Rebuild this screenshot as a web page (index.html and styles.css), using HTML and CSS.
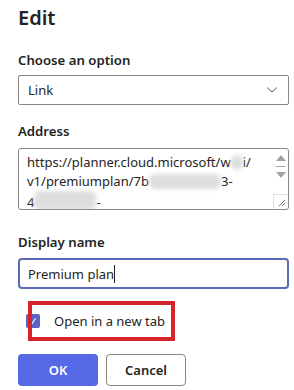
FILE: index.html
```html
<!DOCTYPE html>
<html>

<head>
  <title>Edit</title>
  <link rel="stylesheet" href="styles.css">
</head>

<body>
  <main class="dialog">
    <h1 class="title">Edit</h1>

    <label class="label">Choose an option</label>
    <div class="select">
      <span>Link</span>
      <svg class="chevron" width="12" height="8" viewBox="0 0 12 8">
        <path d="M1 1.5 L6 6 L11 1.5" fill="none" stroke="#605e5c" stroke-width="1"/>
      </svg>
    </div>

    <label class="label label-gap">Address</label>
    <div class="textarea">
      <div class="textarea-text">
        <div>https://planner.cloud.microsoft/w<span class="redact redact-1"></span>i/</div>
        <div>v1/premiumplan/7b<span class="redact redact-2"></span>3-</div>
        <div>4<span class="redact redact-3"></span>-</div>
      </div>
      <div class="scrollbar">
        <span class="arrow-up"></span>
        <span class="thumb"></span>
        <span class="arrow-down"></span>
        <span class="grip">
          <svg width="9" height="9" viewBox="0 0 9 9">
            <path d="M8 2 L2 8 M8 5 L5 8" stroke="#777" stroke-width="1"/>
          </svg>
        </span>
      </div>
    </div>

    <label class="label label-gap-lg">Display name</label>
    <div class="input">Premium plan<span class="caret"></span></div>

    <div class="check-row">
      <span class="checkbox">
        <svg width="10" height="10" viewBox="0 0 10 10">
          <path d="M2.5 5.5 L4 7.5 L7.5 2.5" fill="none" stroke="#fff" stroke-width="1.2"/>
        </svg>
      </span>
      <span class="check-label">Open in a new tab</span>
      <span class="highlight"></span>
    </div>

    <div class="buttons">
      <button class="btn btn-primary">OK</button>
      <button class="btn btn-default">Cancel</button>
    </div>
  </main>
</body>

</html>
```

FILE: styles.css
```css
body {
    margin: 0;
    background-color: #fff;
    font-family: "Noto Sans", "Open Sans", sans-serif;
    color: #242424;
}

.dialog {
    padding: 0 5px 0 18px;
    display: flex;
    flex-direction: column;
}

.title {
    font-size: 20px;
    font-weight: 600;
    margin: 4px 0 0 0;
    line-height: 28px;
}

.label {
    font-size: 13.2px;
    font-weight: 600;
    line-height: 20px;
    margin-top: 18px;
    margin-bottom: 5px;
}

.label-gap {
    margin-top: 16px;
    margin-bottom: 7px;
}

.label-gap-lg {
    margin-top: 22px;
    margin-bottom: 6px;
}

.select {
    height: 30px;
    box-sizing: border-box;
    border: 1px solid #8a8886;
    border-radius: 2px;
    display: flex;
    align-items: center;
    justify-content: space-between;
    padding: 0 10px 0 9px;
    font-size: 13px;
}

.textarea {
    height: 62px;
    box-sizing: border-box;
    border: 1px solid #8a8886;
    border-radius: 3px;
    display: flex;
    overflow: hidden;
}

.textarea-text {
    flex: 1;
    padding: 4px 0 0 8px;
    font-size: 13px;
    line-height: 19px;
    white-space: nowrap;
    overflow: hidden;
}

.redact {
    display: inline-block;
    height: 15px;
    vertical-align: -3px;
    background-color: #dedede;
    filter: blur(2px);
    border-radius: 6px;
}

.redact-1 {
    width: 12px;
}

.redact-2 {
    width: 72px;
}

.redact-3 {
    width: 62px;
    height: 19px;
}

.scrollbar {
    width: 15px;
    display: flex;
    flex-direction: column;
    align-items: center;
    padding-top: 6px;
}

.arrow-up {
    width: 0;
    height: 0;
    border-left: 5px solid transparent;
    border-right: 5px solid transparent;
    border-bottom: 6px solid #a3a3a3;
}

.thumb {
    width: 9px;
    height: 1px;
    background-color: #a3a3a3;
    margin: 5px 0;
}

.arrow-down {
    width: 0;
    height: 0;
    border-left: 5px solid transparent;
    border-right: 5px solid transparent;
    border-top: 6px solid #a3a3a3;
}

.grip {
    margin-top: auto;
    width: 15px;
    height: 15px;
    border-top: 1px solid #e0e0e0;
    border-left: 1px solid #e0e0e0;
    box-sizing: border-box;
    display: flex;
    align-items: flex-end;
    justify-content: flex-end;
    padding: 0 2px 2px 0;
}

.input {
    height: 31px;
    box-sizing: border-box;
    border: 2px solid #5b6ab7;
    border-radius: 4px;
    display: flex;
    align-items: center;
    padding: 0 8px;
    font-size: 13px;
}

.caret {
    width: 1px;
    height: 18px;
    background-color: #242424;
}

.check-row {
    position: relative;
    display: flex;
    align-items: center;
    margin-top: 25px;
    margin-left: 8px;
    height: 14px;
}

.checkbox {
    width: 14px;
    height: 14px;
    border-radius: 2px;
    background-color: #5b63c9;
    display: flex;
    align-items: center;
    justify-content: center;
}

.check-label {
    font-size: 13px;
    margin-left: 14px;
}

.highlight {
    position: absolute;
    left: 2px;
    top: -13px;
    width: 147px;
    height: 40px;
    box-sizing: border-box;
    border: 4px solid #d7242b;
}

.buttons {
    display: flex;
    gap: 8px;
    margin-top: 26px;
}

.btn {
    height: 32px;
    width: 80px;
    border-radius: 4px;
    font-family: "Noto Sans", "Open Sans", sans-serif;
    font-size: 13px;
    font-weight: 600;
}

.btn-primary {
    background-color: #5568e6;
    border: none;
    color: #fff;
}

.btn-default {
    background-color: #fff;
    border: 1px solid #8a8886;
    color: #242424;
}
```
